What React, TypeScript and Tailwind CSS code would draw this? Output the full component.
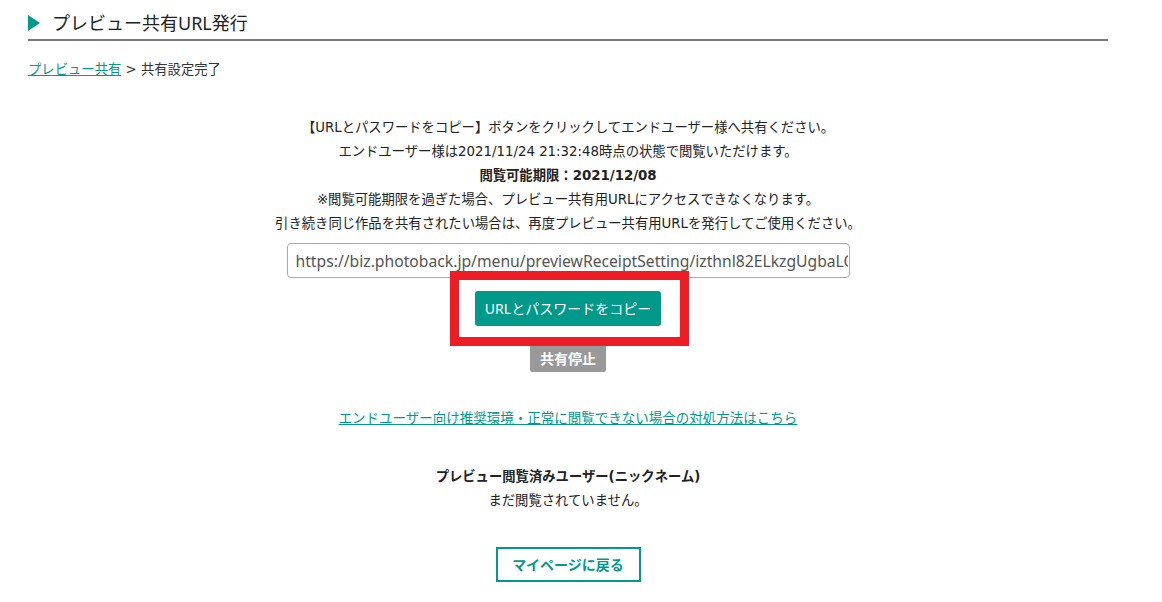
import React from "react";

const BODY = '"DejaVu Sans", "Noto Sans CJK JP", sans-serif';

export default function App() {
  return (
    <div
      className="min-h-[602px] w-[1162px] bg-white text-[#222]"
      style={{ fontFamily: '"Noto Sans", "Noto Sans CJK JP", sans-serif' }}
    >
      <div className="ml-[28px] w-[1080px]">
        <div className="flex h-[41px] items-center border-b-2 border-[#7a7a7a] pt-[6px]">
          <svg width="12" height="16" viewBox="0 0 12 16">
            <polygon points="0,0 12,8 0,16" fill="#00998a" />
          </svg>
          <h1 className="ml-[12px] text-[18px] leading-none text-[#222]">プレビュー共有URL発行</h1>
        </div>
        <div className="mt-[21px] text-[13.33px] leading-[16px]" style={{ fontFamily: BODY }}>
          <a className="text-[#00998a] underline" href="#">プレビュー共有</a>
          <span className="text-[#333]"> &gt; 共有設定完了</span>
        </div>

        <div
          className="mt-[38px] flex flex-col items-center text-[13.33px] leading-[24px] text-[#222]"
          style={{ fontFamily: BODY }}
        >
          <p>【URLとパスワードをコピー】ボタンをクリックしてエンドユーザー様へ共有ください。</p>
          <p>エンドユーザー様は2021/11/24 21:32:48時点の状態で閲覧いただけます。</p>
          <p className="font-bold">閲覧可能期限：2021/12/08</p>
          <p>※閲覧可能期限を過ぎた場合、プレビュー共有用URLにアクセスできなくなります。</p>
          <p>引き続き同じ作品を共有されたい場合は、再度プレビュー共有用URLを発行してご使用ください。</p>

          <div className="relative mt-[7px] flex flex-col items-center">
            <input
              readOnly
              value="https://biz.photoback.jp/menu/previewReceiptSetting/izthnl82ELkzgUgbaLQ"
              className="h-[35px] w-[563px] rounded-[4px] border border-[#aaa] pl-[8px] pr-[1px] text-[15.7px] text-[#555] outline-none"
              style={{ fontFamily: '"Noto Sans", sans-serif' }}
            />
            <button
              className="mt-[13px] h-[35px] w-[186px] rounded-[3px] bg-[#00998a] text-[14px] text-white"
              style={{ fontFamily: '"Noto Sans", "Noto Sans CJK JP", sans-serif' }}
            >
              URLとパスワードをコピー
            </button>
            <button
              className="mt-[19px] h-[27px] w-[76px] rounded-[2px] bg-[#999] text-[14px] font-bold leading-none text-white"
              style={{ fontFamily: '"Noto Sans", "Noto Sans CJK JP", sans-serif' }}
            >
              共有停止
            </button>
            <div className="pointer-events-none absolute left-[163px] top-[28px] h-[75px] w-[239px] border-[9px] border-[#ee1c25]" />
          </div>

          <a href="#" className="mt-[34px] text-[13.5px] text-[#00998a] underline">
            エンドユーザー向け推奨環境・正常に閲覧できない場合の対処方法はこちら
          </a>

          <p className="mt-[35px] font-bold">プレビュー閲覧済みユーザー(ニックネーム)</p>
          <p>まだ閲覧されていません。</p>

          <button
            className="mt-[34px] h-[35px] w-[145px] border-2 border-[#00998a] text-[14px] font-bold text-[#00998a]"
            style={{ fontFamily: '"Noto Sans", "Noto Sans CJK JP", sans-serif' }}
          >
            マイページに戻る
          </button>
        </div>
      </div>
    </div>
  );
}
